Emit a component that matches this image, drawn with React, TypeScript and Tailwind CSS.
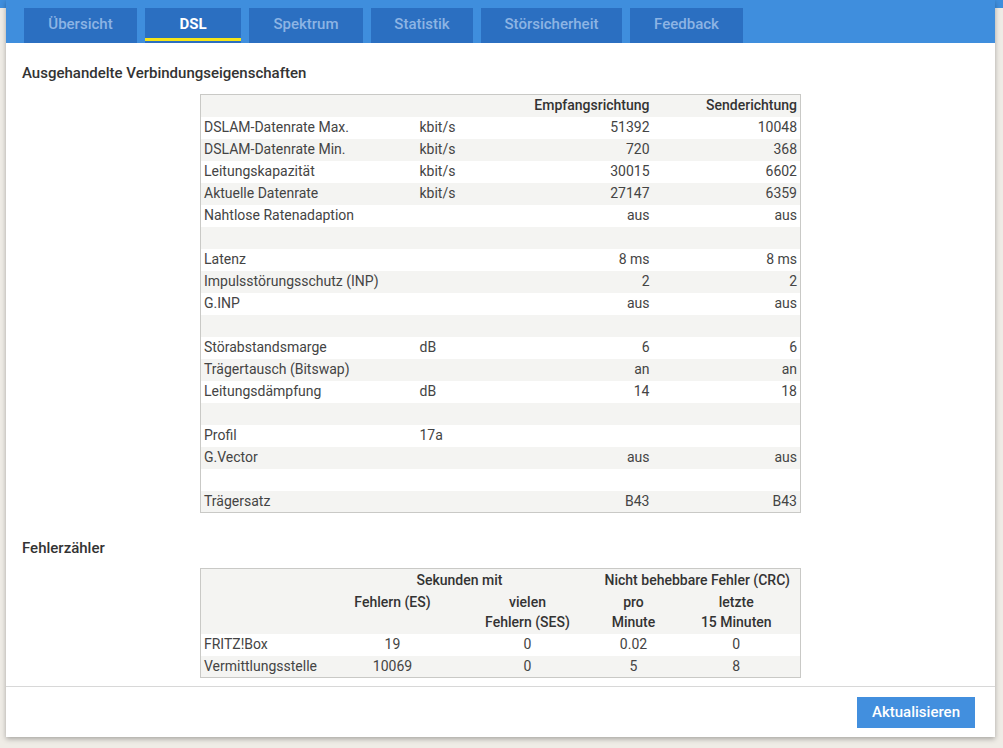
import React from "react";

const tabs = [
  { label: "Übersicht", w: "w-[113px]" },
  { label: "DSL", w: "w-[96px]", active: true },
  { label: "Spektrum", w: "w-[114px]" },
  { label: "Statistik", w: "w-[102px]" },
  { label: "Störsicherheit", w: "w-[141px]" },
  { label: "Feedback", w: "w-[113px]" },
];

type Row = [string, string, string, string] | null;

const rows: Row[] = [
  ["DSLAM-Datenrate Max.", "kbit/s", "51392", "10048"],
  ["DSLAM-Datenrate Min.", "kbit/s", "720", "368"],
  ["Leitungskapazität", "kbit/s", "30015", "6602"],
  ["Aktuelle Datenrate", "kbit/s", "27147", "6359"],
  ["Nahtlose Ratenadaption", "", "aus", "aus"],
  null,
  ["Latenz", "", "8 ms", "8 ms"],
  ["Impulsstörungsschutz (INP)", "", "2", "2"],
  ["G.INP", "", "aus", "aus"],
  null,
  ["Störabstandsmarge", "dB", "6", "6"],
  ["Trägertausch (Bitswap)", "", "an", "an"],
  ["Leitungsdämpfung", "dB", "14", "18"],
  null,
  ["Profil", "17a", "", ""],
  ["G.Vector", "", "aus", "aus"],
  null,
  ["Trägersatz", "", "B43", "B43"],
];

const errors = [
  ["FRITZ!Box", "19", "0", "0.02", "0"],
  ["Vermittlungsstelle", "10069", "0", "5", "8"],
];

export default function App() {
  return (
    <div className="min-h-screen bg-[#efece6] bg-[linear-gradient(to_bottom,#3f8edd_8px,transparent_8px)] font-['Roboto',sans-serif] text-[14px] text-[#444]">
      <div className="ml-[6px] w-[989px] h-[737px] bg-white flex flex-col shadow-[0_2px_5px_rgba(0,0,0,0.3)]">
        {/* Tabs */}
        <div className="h-[43px] bg-[#3f8edd] flex items-end gap-2 pl-[18px]">
          {tabs.map((t) => (
            <div
              key={t.label}
              className={`${t.w} h-[35px] pb-[3px] bg-[#2b6fc1] flex items-center justify-center relative text-[15px] ${
                t.active ? "text-white font-bold" : "text-[#8db4e4] font-medium"
              }`}
            >
              {t.label}
              {t.active && <span className="absolute left-0 right-0 bottom-[2px] h-[3px] bg-[#f5e51a]" />}
            </div>
          ))}
        </div>

        {/* Content */}
        <div className="flex-1 overflow-hidden pt-5 px-4">
          <h2 className="text-[15px] leading-5 font-medium text-[#333]">Ausgehandelte Verbindungseigenschaften</h2>
          <table className="mt-[11px] mx-auto w-[600px] table-fixed border border-[#c9c9c6] border-collapse">
            <colgroup>
              <col className="w-[216px]" />
              <col className="w-[100px]" />
              <col className="w-[136px]" />
              <col className="w-[148px]" />
            </colgroup>
            <thead>
              <tr className="h-[22px] bg-[#f4f4f2]">
                <th />
                <th />
                <th className="text-right pr-[3px] font-medium text-[#333]">Empfangsrichtung</th>
                <th className="text-right pr-[3px] font-medium text-[#333]">Senderichtung</th>
              </tr>
            </thead>
            <tbody>
              {rows.map((r, i) => (
                <tr key={i} className={`h-[22px] ${i % 2 === 1 ? "bg-[#f4f4f2]" : "bg-white"}`}>
                  {r ? (
                    <>
                      <td className="pl-[3px] whitespace-nowrap">{r[0]}</td>
                      <td className="pl-[3px]">{r[1]}</td>
                      <td className="text-right pr-[3px]">{r[2]}</td>
                      <td className="text-right pr-[3px]">{r[3]}</td>
                    </>
                  ) : (
                    <td colSpan={4} />
                  )}
                </tr>
              ))}
            </tbody>
          </table>

          <h2 className="mt-[25px] text-[15px] leading-5 font-medium text-[#333]">Fehlerzähler</h2>
          <table className="mt-[10px] mx-auto w-[600px] table-fixed border border-[#c9c9c6] border-collapse">
            <colgroup>
              <col className="w-[124px]" />
              <col className="w-[136px]" />
              <col className="w-[134px]" />
              <col className="w-[78px]" />
              <col className="w-[128px]" />
            </colgroup>
            <thead className="bg-[#f4f4f2] font-medium text-[#333] leading-5">
              <tr className="h-[22px]">
                <th />
                <th colSpan={2} className="text-center font-medium">Sekunden mit</th>
                <th colSpan={2} className="text-center font-medium whitespace-nowrap">Nicht behebbare Fehler (CRC)</th>
              </tr>
              <tr>
                <th />
                <th className="align-top font-medium pt-[1px] pb-[2px]">Fehlern (ES)</th>
                <th className="align-top font-medium pt-[1px] pb-[2px]">vielen<br />Fehlern (SES)</th>
                <th className="align-top font-medium pt-[1px] pb-[2px]">pro<br />Minute</th>
                <th className="align-top font-medium pt-[1px] pb-[2px]">letzte<br />15 Minuten</th>
              </tr>
            </thead>
            <tbody>
              {errors.map((r, i) => (
                <tr key={r[0]} className={`h-[22px] ${i % 2 === 1 ? "bg-[#f4f4f2]" : "bg-white"}`}>
                  <td className="pl-[3px] whitespace-nowrap">{r[0]}</td>
                  <td className="text-center">{r[1]}</td>
                  <td className="text-center">{r[2]}</td>
                  <td className="text-center">{r[3]}</td>
                  <td className="text-center">{r[4]}</td>
                </tr>
              ))}
            </tbody>
          </table>
        </div>

        {/* Footer */}
        <div className="h-[51px] border-t border-[#d8d8d8] flex items-start justify-end pt-[10px] pr-5">
          <button className="h-[31px] w-[118px] bg-[#428fde] text-white text-[15px] font-medium">Aktualisieren</button>
        </div>
      </div>
    </div>
  );
}
